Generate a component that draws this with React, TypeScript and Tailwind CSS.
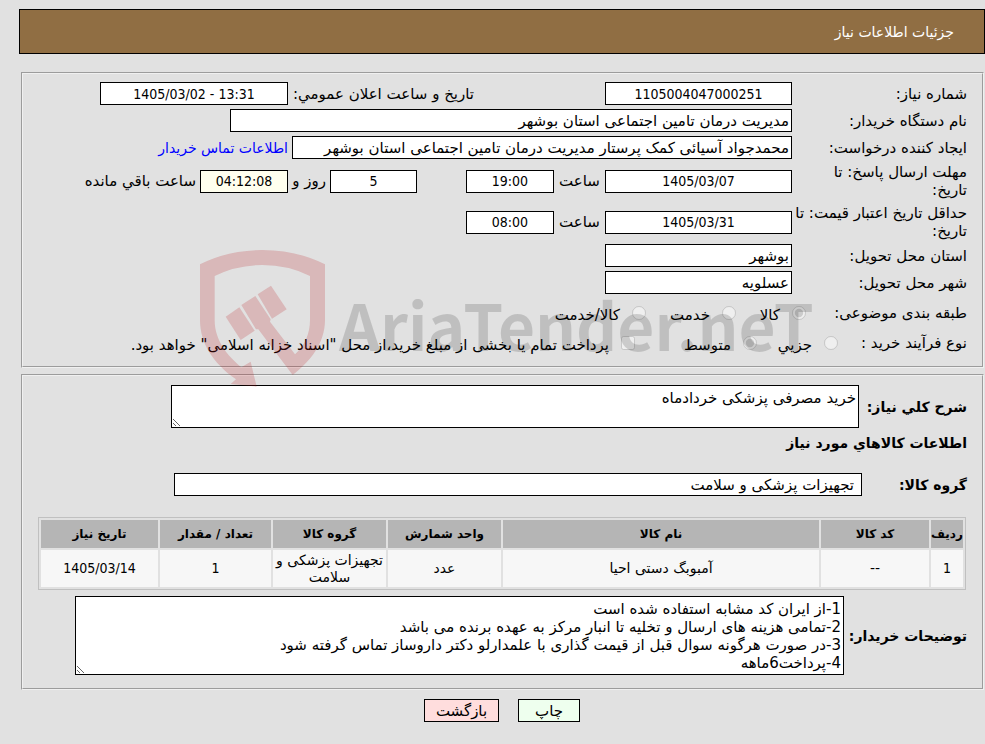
import type { ReactNode } from "react";
import clsx from "clsx";

const columns = [
  { title: "ردیف", width: "w-[32px]" },
  { title: "کد کالا", width: "w-[108px]" },
  { title: "نام کالا", width: "w-auto" },
  { title: "واحد شمارش", width: "w-[113px]" },
  { title: "گروه کالا", width: "w-[113px]" },
  { title: "تعداد / مقدار", width: "w-[111px]" },
  { title: "تاریخ نیاز", width: "w-[117px]" },
];

const items = [
  ["1", "--", "آمبوبگ دستی احیا", "عدد", "تجهیزات پزشکی و سلامت", "1", "1405/03/14"],
];

const notes = [
  "1-از ایران کد مشابه استفاده شده است",
  "2-تمامی هزینه های ارسال و تخلیه تا انبار مرکز به عهده برنده می باشد",
  "3-در صورت هرگونه سوال قبل از قیمت گذاری با علمدارلو دکتر داروساز تماس گرفته شود",
  "4-پرداخت6ماهه",
].join("\n");

const Row = ({ children }: { children: ReactNode }) => (
  <div className="flex items-center">{children}</div>
);

const Field = ({ id, value, className }: { id: string; value: string; className?: string }) => (
  <input
    id={id}
    readOnly
    defaultValue={value}
    className={clsx("h-[23px] shrink-0 border border-black px-0.5", className)}
  />
);

// Numbers and dates, centred and always left to right
const NumberField = ({ id, value, className }: { id: string; value: string; className?: string }) => (
  <Field
    id={id}
    value={value}
    className={clsx(
      "text-center font-['DejaVu_Sans_Condensed','DejaVu_Sans',sans-serif] text-[14px] [direction:ltr]",
      className,
    )}
  />
);

const Label = ({ id, children }: { id: string; children: ReactNode }) => (
  <label htmlFor={id} className="w-[175px] shrink-0 whitespace-nowrap">
    {children}
  </label>
);

const Watermark = () => (
  <div
    dir="ltr"
    aria-hidden="true"
    className="pointer-events-none absolute left-[200px] top-[250px] flex"
  >
    <svg className="h-[137px] w-[125px]" viewBox="60 30 375 411" fill="#b91419" fillOpacity="0.2">
      <path d="M60 73Q145 30 247 30Q350 30 435 73V240C435 310 390 365 338 405L235 268L228 268L184 195L226 168L272 238L270 245L345 343C375 315 390 280 390 240V108Q325 75 247 75Q170 75 104 108V240C104 300 140 345 184 382L212 365L230 440L152 432L168 418C100 370 60 310 60 240Z" />
      <path d="M137 230L178 202L224 272L182 300Z" />
      <path d="M233 163L273 137L320 208L276 236Z" />
    </svg>
    <span className="ml-[14px] mt-[28px] font-['Noto_Sans_CJK_JP',sans-serif] text-[64px] leading-[90px] font-bold text-black/15">
      AriaTender.neT
    </span>
  </div>
);

const App = () => {
  return (
    <div
      dir="rtl"
      className="relative min-h-screen bg-[#e1e1e1] pb-5 pl-[19px] pt-[9px] font-['DejaVu_Sans',sans-serif] text-[15px] leading-[18px] text-black"
    >
      <header className="flex h-[45px] items-center border border-black bg-[#906e43] px-[30px] text-[14px] text-white">
        <h1>جزئیات اطلاعات نیاز</h1>
      </header>

      {/* Request details */}
      <fieldset className="ml-0.5 mr-px mt-[18px] flex h-[296px] flex-col gap-1 border-2 border-[#f0f0f0] px-[15px] pt-2 [border-style:groove]">
        <Row>
          <Label id="number">شماره نیاز:</Label>
          <NumberField id="number" value="1105004047000251" className="w-[187px] bg-white" />
          <label htmlFor="announced" className="mr-[131px] w-[186px] whitespace-nowrap">
            تاریخ و ساعت اعلان عمومي:
          </label>
          <NumberField id="announced" value="1405/03/02 - 13:31" className="w-[188px] bg-white" />
        </Row>
        <Row>
          <Label id="buyer">نام دستگاه خریدار:</Label>
          <Field id="buyer" value="مدیریت درمان تامین اجتماعی استان بوشهر" className="w-[562px] bg-white" />
        </Row>
        <Row>
          <Label id="creator">ایجاد کننده درخواست:</Label>
          <Field
            id="creator"
            value="محمدجواد آسیائی کمک پرستار مدیریت درمان تامین اجتماعی استان بوشهر"
            className="w-[500px] bg-white"
          />
          <a href="#contact" className="mr-1 text-[14px] text-[#0000ff]">
            اطلاعات تماس خریدار
          </a>
        </Row>
        <Row>
          <Label id="deadline">
            مهلت ارسال پاسخ: تا
            <br />
            تاریخ:
          </Label>
          <NumberField id="deadline" value="1405/03/07" className="w-[187px] bg-white" />
          <label htmlFor="deadline-hour" className="w-[51px] text-center">
            ساعت
          </label>
          <NumberField id="deadline-hour" value="19:00" className="w-[88px] bg-white" />
          <NumberField id="days-left" value="5" className="mr-[49px] w-[87px] bg-white" />
          <label htmlFor="days-left" className="w-[42px] pr-1">
            روز و
          </label>
          <NumberField id="time-left" value="04:12:08" className="w-[88px] bg-[#ffffee]" />
          <label htmlFor="time-left" className="mr-1">
            ساعت باقي مانده
          </label>
        </Row>
        <div className="flex items-center pt-px">
          <Label id="valid-until">
            حداقل تاریخ اعتبار قیمت: تا
            <br />
            تاریخ:
          </Label>
          <NumberField id="valid-until" value="1405/03/31" className="w-[187px] bg-white" />
          <label htmlFor="valid-hour" className="w-[51px] text-center">
            ساعت
          </label>
          <NumberField id="valid-hour" value="08:00" className="w-[88px] bg-white" />
        </div>
        <Row>
          <Label id="province">استان محل تحویل:</Label>
          <Field id="province" value="بوشهر" className="w-[187px] bg-white" />
        </Row>
        <Row>
          <Label id="city">شهر محل تحویل:</Label>
          <Field id="city" value="عسلویه" className="w-[187px] bg-white" />
        </Row>
        <div className="flex h-[30px] items-center gap-3">
          <span className="w-[149px]">طبقه بندی موضوعی:</span>
          <input type="radio" id="goods" name="category" disabled defaultChecked className="size-[14px]" />
          <label htmlFor="goods" className="w-[32px] pt-1">کالا</label>
          <input type="radio" id="service" name="category" disabled className="size-[14px]" />
          <label htmlFor="service" className="w-[52px] pt-1">خدمت</label>
          <input type="radio" id="both" name="category" disabled className="size-[14px]" />
          <label htmlFor="both" className="pt-1">کالا/خدمت</label>
        </div>
        <div className="flex h-[22px] items-center gap-3">
          <span className="w-[117px]">نوع فرآیند خرید :</span>
          <input type="radio" id="small" name="process" disabled className="size-[14px]" />
          <label htmlFor="small" className="w-[43px] pt-1">جزیي</label>
          <input type="radio" id="medium" name="process" disabled defaultChecked className="size-[14px]" />
          <label htmlFor="medium" className="w-[84px] pt-1">متوسط</label>
          <input type="checkbox" id="treasury" disabled className="size-[14px]" />
          <label htmlFor="treasury" className="whitespace-nowrap pt-1">
            پرداخت تمام یا بخشی از مبلغ خرید،از محل "اسناد خزانه اسلامی" خواهد بود.
          </label>
        </div>
      </fieldset>

      {/* Requested goods */}
      <fieldset className="ml-0.5 mr-px mt-1.5 border-2 border-[#f0f0f0] px-[15px] pb-[13px] pt-[9px] [border-style:groove]">
        <Row>
          <label htmlFor="summary" className="w-[108px] shrink-0 whitespace-nowrap text-[14px] font-bold">
            شرح کلي نیاز:
          </label>
          <textarea
            id="summary"
            readOnly
            defaultValue="خرید مصرفی پزشکی خردادماه"
            className="h-[43px] w-[688px] resize border border-black bg-white px-0.5 py-[3px]"
          />
        </Row>
        <h2 className="mt-[6px] text-[14px] font-bold">اطلاعات کالاهاي مورد نیاز</h2>
        <div className="mt-[21px] flex items-center">
          <label htmlFor="group" className="w-[105px] shrink-0 text-[14px] font-bold">
            گروه کالا:
          </label>
          <Field id="group" value="تجهیزات پزشکی و سلامت" className="w-[688px] bg-white pr-[7px]" />
        </div>

        <div className="mr-px mt-[21px]">
          <table className="w-full table-fixed border-separate border-spacing-0.5 border border-[#c0c0c0] text-center text-[14px] leading-[17px]">
            <thead>
              <tr className="h-[28px] bg-[#b5b5b5]">
                {columns.map((column) => (
                  <th key={column.title} className={clsx("whitespace-nowrap text-[12px]", column.width)}>
                    {column.title}
                  </th>
                ))}
              </tr>
            </thead>
            <tbody>
              {items.map((item) => (
                <tr key={item[0]} className="h-[37px] bg-[#f7f7f7]">
                  {item.map((cell, i) => (
                    <td
                      key={i}
                      className={clsx(
                        /^[\d/]+$/.test(cell) && "font-['DejaVu_Sans_Condensed','DejaVu_Sans',sans-serif]",
                      )}
                    >
                      {cell}
                    </td>
                  ))}
                </tr>
              ))}
            </tbody>
          </table>
        </div>

        <div className="mt-[6px] flex items-center">
          <label htmlFor="notes" className="w-[123px] shrink-0 whitespace-nowrap text-[14px] font-bold">
            توضیحات خریدار:
          </label>
          <textarea
            id="notes"
            readOnly
            defaultValue={notes}
            className="h-[79px] w-[769px] resize border border-black bg-white px-0.5 py-[3px]"
          />
        </div>
      </fieldset>

      <div className="mt-[9px] flex justify-center gap-[19px]">
        <button type="button" className="h-[23px] w-[62px] border border-black bg-[#eeffee]">
          چاپ
        </button>
        <button type="button" className="h-[23px] w-[75px] border border-black bg-[#ffdddd]">
          بازگشت
        </button>
      </div>

      <Watermark />
    </div>
  );
};

export default App;
